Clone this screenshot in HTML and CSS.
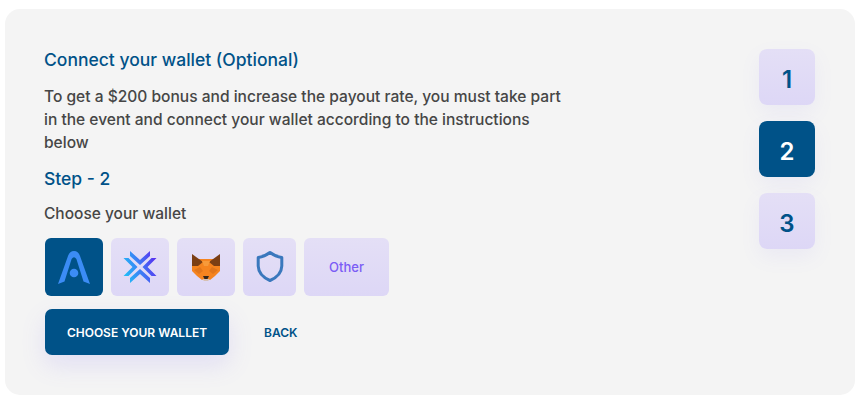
FILE: index.html
```html
<!DOCTYPE html>
<html lang="en">
<head>
<meta charset="utf-8">
<title>Connect your wallet</title>
<link rel="stylesheet" href="styles.css">
</head>
<body>
<main class="card">
  <section class="content">
    <h2 class="title">Connect your wallet (Optional)</h2>
    <p class="desc">To get a $200 bonus and increase the payout rate, you must take part in the event and connect your wallet according to the instructions below</p>
    <h3 class="step">Step - 2</h3>
    <p class="choose">Choose your wallet</p>
    <div class="wallets">
      <button class="wallet wide-58 active" aria-label="Argent">
        <svg width="34" height="34" viewBox="0 0 34 34"><path d="M1 34 L11 6 Q12.800 1 17 1 Q21.200 1 23 6 L33 34 L26.500 31.500 L19.400 9 Q17 5.500 14.600 9 L7.500 31.500 Z" fill="#3b8cf5"/><circle cx="17" cy="23" r="4.300" fill="#3b8cf5"/></svg>
      </button>
      <button class="wallet wide-58" aria-label="Exodus">
        <svg width="34" height="34" viewBox="0 0 34 34">
          <defs><linearGradient id="ex" gradientUnits="userSpaceOnUse" x1="0" y1="22" x2="34" y2="12"><stop offset="0" stop-color="#1fc0f7"/><stop offset="0.500" stop-color="#3d7cf5"/><stop offset="1" stop-color="#5a2df0"/></linearGradient></defs>
          <path fill="url(#ex)" d="M7 1 L17 10 L27 1 L27 6 L17 15 L7 6 Z M7 33 L17 24 L27 33 L27 28 L17 19 L7 28 Z M0.500 8 L5.500 8 L14.500 17 L5.500 26 L0.500 26 L9.500 17 Z M33.500 8 L28.500 8 L19.500 17 L28.500 26 L33.500 26 L24.500 17 Z"/>
        </svg>
      </button>
      <button class="wallet wide-58" aria-label="MetaMask">
        <svg width="30" height="28" viewBox="0 0 30 28">
          <path d="M1 12 L8 6 L22 6 L29 12 L29 18 L24 23 L19 27 L11 27 L6 23 L1 18 Z" fill="#f5841f"/>
          <path d="M1 1 L12 9 L7 13 L1 13 Z M29 1 L18 9 L23 13 L29 13 Z" fill="#7b3f14"/>
          <path d="M11 8 L19 8 L17 13 L13 13 Z" fill="#f79a3a"/>
          <path d="M3 17 L9 14 L12 18 L8 21 Z M27 17 L21 14 L18 18 L22 21 Z" fill="#e2761b"/>
          <path d="M11 26 L19 26 L17 28 L13 28 Z" fill="#d7c1b3"/>
          <path d="M12 23 L18 23 L16.500 26 L13.500 26 Z" fill="#33261c"/>
        </svg>
      </button>
      <button class="wallet wide-53" aria-label="Trust Wallet">
        <svg width="30" height="34" viewBox="0 0 30 34"><path d="M15 2.500 Q20 6.500 26.800 7.500 L26.800 16 Q26.500 25.500 15 30.500 Q3.500 25.500 3.200 16 L3.200 7.500 Q10 6.500 15 2.500 Z" fill="none" stroke="#3a78bd" stroke-width="3" stroke-linejoin="round"/></svg>
      </button>
      <button class="wallet wide-85 other">Other</button>
    </div>
    <div class="actions">
      <button class="primary">CHOOSE YOUR WALLET</button>
      <button class="back">BACK</button>
    </div>
  </section>
  <nav class="steps">
    <div class="num">1</div>
    <div class="num current">2</div>
    <div class="num">3</div>
  </nav>
</main>
</body>
</html>
```
FILE: styles.css
```css
* { box-sizing: border-box; }
html, body { margin: 0; background: #fff; }
body { padding: 9px 13px 10px 5px; font-family: "Inter", "Liberation Sans", sans-serif; }
.card {
  height: 386px;
  background: #f4f4f4;
  border-radius: 15px;
  display: flex;
  justify-content: space-between;
  padding: 40px 40px 0 40px;
}
.content { width: 530px; }
.title { margin: 0 0 0 -1px; font-size: 17.500px; line-height: 22px; font-weight: 500; color: #005288; }
.desc { margin: 13.500px 0 0 -1px; font-size: 15.550px; line-height: 23px; font-weight: 500; color: #464646; }
.step { margin: 14.500px 0 0 -1px; font-size: 17.500px; line-height: 22px; font-weight: 500; color: #005288; }
.choose { margin: 13px 0 0 -1px; font-size: 15.500px; line-height: 22px; font-weight: 500; color: #464646; }
.wallets { display: flex; gap: 8px; margin-top: 13px; }
.wallet {
  height: 58px;
  padding: 0;
  border: 0;
  border-radius: 6px;
  background: linear-gradient(180deg, #e4dff6, #ddd7f6);
  display: flex;
  align-items: center;
  justify-content: center;
}
.wide-58 { width: 58px; }
.wide-53 { width: 53px; }
.wide-85 { width: 85px; }
.wallet.active { background: #005288; }
.other { font: 500 13px "Inter", sans-serif; color: #7b5cf5; }
.actions { display: flex; align-items: center; gap: 35px; margin-top: 13px; }
.primary {
  width: 184px;
  height: 46px;
  border: 0;
  border-radius: 7px;
  background: #005288;
  color: #fff;
  font: 600 12px "Inter", sans-serif;
  box-shadow: 0 10px 24px rgba(130, 110, 245, 0.16);
}
.back { border: 0; padding: 0; background: none; color: #005288; font: 600 12px "Inter", sans-serif; }
.steps { display: flex; flex-direction: column; gap: 16px; }
.num {
  width: 56px;
  height: 56px;
  padding-top: 4px;
  border-radius: 8px;
  background: linear-gradient(180deg, #e4dff6, #ddd7f6);
  color: #005288;
  font-size: 24px;
  font-weight: 600;
  display: flex;
  align-items: center;
  justify-content: center;
  box-shadow: 0 8px 20px rgba(130, 110, 245, 0.08);
}
.num.current { background: #005288; color: #fff; }
```
